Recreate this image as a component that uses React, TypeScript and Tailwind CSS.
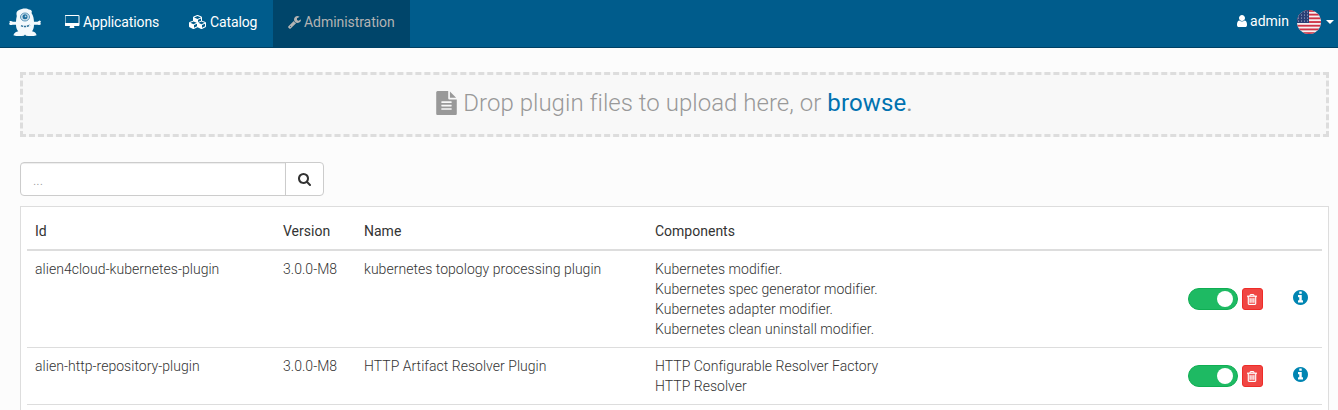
import React from "react";

type IconProps = { box: string; d: string; className: string };

const Icon = ({ box, d, className }: IconProps) => (
  <svg viewBox={box} className={`shrink-0 fill-current ${className}`} aria-hidden="true">
    <path d={d} />
  </svg>
);

const DESKTOP =
  "M1728 992v-832q0-13-9.5-22.5t-22.5-9.5h-1600q-13 0-22.5 9.5t-9.5 22.5v832q0 13 9.5 22.5t22.5 9.5h1600q13 0 22.5-9.5t9.5-22.5zm128-832v1088q0 66-47 113t-113 47h-544q0 37 16 77.5t32 71 16 43.5q0 26-19 45t-45 19h-512q-26 0-45-19t-19-45q0-14 16-44t32-70 16-78h-544q-66 0-113-47t-47-113v-1088q0-66 47-113t113-47h1600q66 0 113 47t47 113z";
const CUBES =
  "M640 1632l384-192v-314l-384 164v342zm-64-454l404-173-404-173-404 173zm1088 454l384-192v-314l-384 164v342zm-64-454l404-173-404-173-404 173zm-448-293l384-165v-266l-384 164v267zm-64-379l441-189-441-189-441 189zm1088 518v416q0 36-19 67t-52 47l-448 224q-25 14-57 14t-57-14l-448-224q-4-2-7-4-2 2-7 4l-448 224q-25 14-57 14t-57-14l-448-224q-33-16-52-47t-19-67v-416q0-38 21.5-70t56.5-48l434-186v-400q0-38 21.5-70t56.5-48l448-192q23-10 50-10t50 10l448 192q35 16 56.5 48t21.5 70v400l434 186q36 16 57 48t21 70z";
const WRENCH =
  "M448 1472q0-26-19-45t-45-19-45 19-19 45 19 45 45 19 45-19 19-45zm644-420l-682 682q-37 37-90 37-52 0-91-37l-106-108q-38-36-38-90 0-53 38-91l681-681q39 98 114.5 173.5t173.5 114.5zm634-435q0 39-23 106-47 134-164.5 217.5t-258.5 83.5q-185 0-316.5-131.5t-131.5-316.5 131.5-316.5 316.5-131.5q58 0 121.5 16.5t107.5 46.5q16 11 16 28t-16 28l-293 169v224l193 107q5-3 79-48.5t135.5-81 70.5-35.5q15 0 23.5 10t8.5 25z";
const USER =
  "M1536 1399q0 109-62.5 187t-150.5 78h-854q-88 0-150.5-78t-62.5-187q0-85 8.5-160.5t31.5-152 58.5-131 94-89 134.5-34.5q131 128 313 128t313-128q76 0 134.5 34.5t94 89 58.5 131 31.5 152 8.5 160.5zm-256-887q0 159-112.5 271.5t-271.5 112.5-271.5-112.5-112.5-271.5 112.5-271.5 271.5-112.5 271.5 112.5 112.5 271.5z";
const FILE =
  "M1596 476q14 14 28 36h-472v-472q22 14 36 28zm-476 164h544v1056q0 40-28 68t-68 28h-1344q-40 0-68-28t-28-68v-1600q0-40 28-68t68-28h800v544q0 40 28 68t68 28zm160 736v-64q0-14-9-23t-23-9h-704q-14 0-23 9t-9 23v64q0 14 9 23t23 9h704q14 0 23-9t9-23zm0-256v-64q0-14-9-23t-23-9h-704q-14 0-23 9t-9 23v64q0 14 9 23t23 9h704q14 0 23-9t9-23zm0-256v-64q0-14-9-23t-23-9h-704q-14 0-23 9t-9 23v64q0 14 9 23t23 9h704q14 0 23-9t9-23z";
const SEARCH =
  "M1216 832q0-185-131.5-316.5t-316.5-131.5-316.5 131.5-131.5 316.5 131.5 316.5 316.5 131.5 316.5-131.5 131.5-316.5zm512 832q0 52-38 90t-90 38q-54 0-90-38l-343-342q-179 124-399 124-143 0-273.5-55.5t-225-150-150-225-55.5-273.5 55.5-273.5 150-225 225-150 273.5-55.5 273.5 55.5 225 150 150 225 55.5 273.5q0 220-124 399l343 343q37 37 37 90z";
const TRASH =
  "M704 736v576q0 14-9 23t-23 9h-64q-14 0-23-9t-9-23v-576q0-14 9-23t23-9h64q14 0 23 9t9 23zm256 0v576q0 14-9 23t-23 9h-64q-14 0-23-9t-9-23v-576q0-14 9-23t23-9h64q14 0 23 9t9 23zm256 0v576q0 14-9 23t-23 9h-64q-14 0-23-9t-9-23v-576q0-14 9-23t23-9h64q14 0 23 9t9 23zm128 724v-948h-896v948q0 22 7 40.5t14.5 27 10.5 8.5h832q3 0 10.5-8.5t14.5-27 7-40.5zm-672-1076h448l-48-117q-7-9-17-11h-317q-10 2-17 11zm928 32v64q0 14-9 23t-23 9h-96v948q0 83-47 143.5t-113 60.5h-832q-66 0-113-58.5t-47-141.5v-952h-96q-14 0-23-9t-9-23v-64q0-14 9-23t23-9h309l70-167q15-37 54-63t79-26h320q40 0 79 26t54 63l70 167h309q14 0 23 9t9 23z";
const INFO =
  "M1152 1376v-160q0-14-9-23t-23-9h-96v-512q0-14-9-23t-23-9h-320q-14 0-23 9t-9 23v160q0 14 9 23t23 9h96v320h-96q-14 0-23 9t-9 23v160q0 14 9 23t23 9h448q14 0 23-9t9-23zm-128-896v-160q0-14-9-23t-23-9h-192q-14 0-23 9t-9 23v160q0 14 9 23t23 9h192q14 0 23-9t9-23zm640 416q0 209-103 385.5t-279.5 279.5-385.5 103-385.5-103-279.5-279.5-103-385.5 103-385.5 279.5-279.5 385.5-103 385.5 103 279.5 279.5 103 385.5z";

const Mascot = () => (
  <svg viewBox="0 0 34 30" className="h-[30px] w-[34px]" aria-hidden="true">
    <path
      fill="#f4f9fc"
      d="M8.8 8C8 5 8.500 3 11 2C14 .2 19 -.2 21 1.600C23.500 1.800 24.500 3.500 23.500 5C25.300 7.500 25.800 10.500 26 13.700L29.500 13.700L31.500 12.600C33.200 13 33.200 14 32.200 14.700L33 16C32 17.300 30.500 16.900 29 16.800L26 16.800C26 20 25 22 24 23.300C26.500 23.700 28.200 25 28.600 27.200Q25 28.500 18 27.800L17 26.400L16 27.800Q9 28.500 5.400 27.200C6 25 8 23.700 10.300 23.300C9 22 8 20 8 16.800L4.500 16.800C2.500 17.200 1.500 16.900 1 15.700L2 14.700C.8 13.800 1.500 12.800 3 13L5 13.800L8 13.800C8 12 8.300 10 8.800 8Z"
    />
    <ellipse cx="17" cy="9" rx="4.500" ry="4" fill="#cfe1ec" stroke="#5b97ba" strokeWidth="1" />
    <circle cx="17" cy="8.700" r="2.500" fill="#21709f" />
    <circle cx="17.600" cy="8.300" r=".9" fill="#b9d9e8" />
    <path d="M13 17.600q4.500 2 9-.6" fill="none" stroke="#2d719a" strokeWidth="1.500" strokeDasharray="2.200 .8" />
  </svg>
);

const Flag = () => (
  <svg viewBox="0 0 24 24" className="h-6 w-6" aria-hidden="true">
    <defs>
      <clipPath id="flag-disc">
        <circle cx="12" cy="12" r="12" />
      </clipPath>
    </defs>
    <g clipPath="url(#flag-disc)">
      <rect width="24" height="24" fill="#f5f1f2" />
      {[0, 1, 2, 3, 4, 5, 6].map((i) => (
        <rect key={i} y={i * 3.7} width="24" height="1.850" fill="#cf3346" />
      ))}
      <rect width="12" height="13" fill="#293f75" />
      {[2, 5, 8, 11].map((y) =>
        [1.5, 4.5, 7.5, 10.5].map((x) => <circle key={`${x}-${y}`} cx={x} cy={y} r=".6" fill="#c3cde0" />)
      )}
    </g>
  </svg>
);

const rows = [
  {
    id: "alien4cloud-kubernetes-plugin",
    version: "3.0.0-M8",
    name: "kubernetes topology processing plugin",
    components: [
      "Kubernetes modifier.",
      "Kubernetes spec generator modifier.",
      "Kubernetes adapter modifier.",
      "Kubernetes clean uninstall modifier.",
    ],
  },
  {
    id: "alien-http-repository-plugin",
    version: "3.0.0-M8",
    name: "HTTP Artifact Resolver Plugin",
    components: ["HTTP Configurable Resolver Factory", "HTTP Resolver"],
  },
];

export default function App() {
  return (
    <div className="h-[410px] overflow-hidden bg-[#fcfcfc] font-['Roboto',sans-serif] text-sm leading-5 font-light text-[#333]">
      <nav className="flex h-12 border-b border-[#004165] bg-[#005c8c] font-normal text-white">
        <div className="flex w-[50px] pt-2 pl-2">
          <Mascot />
        </div>
        <a className="flex w-[124px] items-start pt-3 pl-[15px] tracking-[-0.12px]">
          <Icon box="0 0 1920 1792" d={DESKTOP} className="mt-[3px] mr-[3px] h-[14px] w-[15px]" />
          Applications
        </a>
        <a className="flex w-[99px] items-start pt-3 pl-[15px] tracking-[-0.12px]">
          <Icon box="0 0 2304 1792" d={CUBES} className="mt-[3px] mr-[3px] h-[14px] w-[18px]" />
          Catalog
        </a>
        <a className="flex w-[137px] items-start bg-[#00456a] pt-3 pl-[15px] tracking-[-0.06px] text-[#b3b3b3]">
          <Icon box="64 0 1664 1792" d={WRENCH} className="mt-[3px] mr-[3px] h-[14px] w-[13px]" />
          Administration
        </a>
        <div className="ml-auto flex items-start pt-[11px] pr-1">
          <Icon box="256 0 1280 1792" d={USER} className="mt-[3px] mr-[3px] h-[14px] w-[10px]" />
          admin
          <span className="-mt-[1px] ml-2">
            <Flag />
          </span>
          <span className="mt-[9px] ml-[5px] border-x-4 border-t-4 border-x-transparent border-t-white" />
        </div>
      </nav>

      <main className="pr-[9px] pl-5">
        <section className="mt-6 flex h-[65px] items-center justify-center border-[3px] border-dashed border-[#ddd] bg-[#f8f8f8] pb-1 text-2xl text-[#999]">
          <Icon box="128 0 1536 1792" d={FILE} className="mr-[6px] h-6 w-[21px]" />
          <span className="tracking-[0.03px]">
            Drop plugin files to upload here, or{" "}
            <span className="font-normal tracking-[0.12px]">
              <a className="text-[#0072b0]">browse</a>.
            </span>
          </span>
        </section>

        <div className="mt-[25px] flex h-[34px] w-[304px] overflow-hidden rounded-[4px] border border-[#ccc] bg-white">
          <input
            placeholder="..."
            className="w-[265px] border-r border-[#ccc] px-3 pt-[2px] shadow-[inset_0_1px_1px_rgba(0,0,0,0.075)] outline-none placeholder:text-[#999]"
          />
          <button className="flex flex-1 items-center justify-center">
            <Icon box="64 128 1664 1664" d={SEARCH} className="h-[13px] w-[13px]" />
          </button>
        </div>

        <section className="mt-[10px] h-[260px] border border-[#ddd] bg-white px-[6px] pt-[6px]">
          <table className="w-full table-fixed border-collapse">
            <colgroup>
              <col className="w-[248px]" />
              <col className="w-[81px]" />
              <col className="w-[291px]" />
              <col />
              <col className="w-[142px]" />
            </colgroup>
            <thead>
              <tr className="h-[37px] border-b-2 border-[#ddd] text-left">
                <th className="p-2 font-normal">Id</th>
                <th className="p-2 font-normal">Version</th>
                <th className="p-2 font-normal">Name</th>
                <th className="p-2 font-normal">Components</th>
                <th />
              </tr>
            </thead>
            <tbody className="tracking-[0.03px]">
              {rows.map((row) => (
                <tr key={row.id} className="border-b border-[#ddd] align-top">
                  <td className="p-2">{row.id}</td>
                  <td className="p-2">{row.version}</td>
                  <td className="p-2">{row.name}</td>
                  <td className="p-2">
                    {row.components.map((item) => (
                      <div key={item}>{item}</div>
                    ))}
                  </td>
                  <td className="p-2 align-middle">
                    <div className="flex items-center">
                      <span className="flex h-[22px] w-[50px] items-center justify-end rounded-full border border-[#0fae53] bg-[#1eba63] pr-1">
                        <span className="h-4 w-4 rounded-full bg-white" />
                      </span>
                      <button className="ml-1 flex h-[22px] w-[21px] items-center justify-center rounded-[3px] border border-[#ee2c28] bg-[#f04643] pt-px pr-px text-white">
                        <Icon box="192 128 1408 1536" d={TRASH} className="h-[11px] w-[10px] stroke-current stroke-[50px]" />
                      </button>
                      <Icon box="128 128 1536 1536" d={INFO} className="mb-[3px] ml-[30px] h-[15px] w-[15px] text-[#0085b2]" />
                    </div>
                  </td>
                </tr>
              ))}
            </tbody>
          </table>
        </section>
      </main>
    </div>
  );
}
